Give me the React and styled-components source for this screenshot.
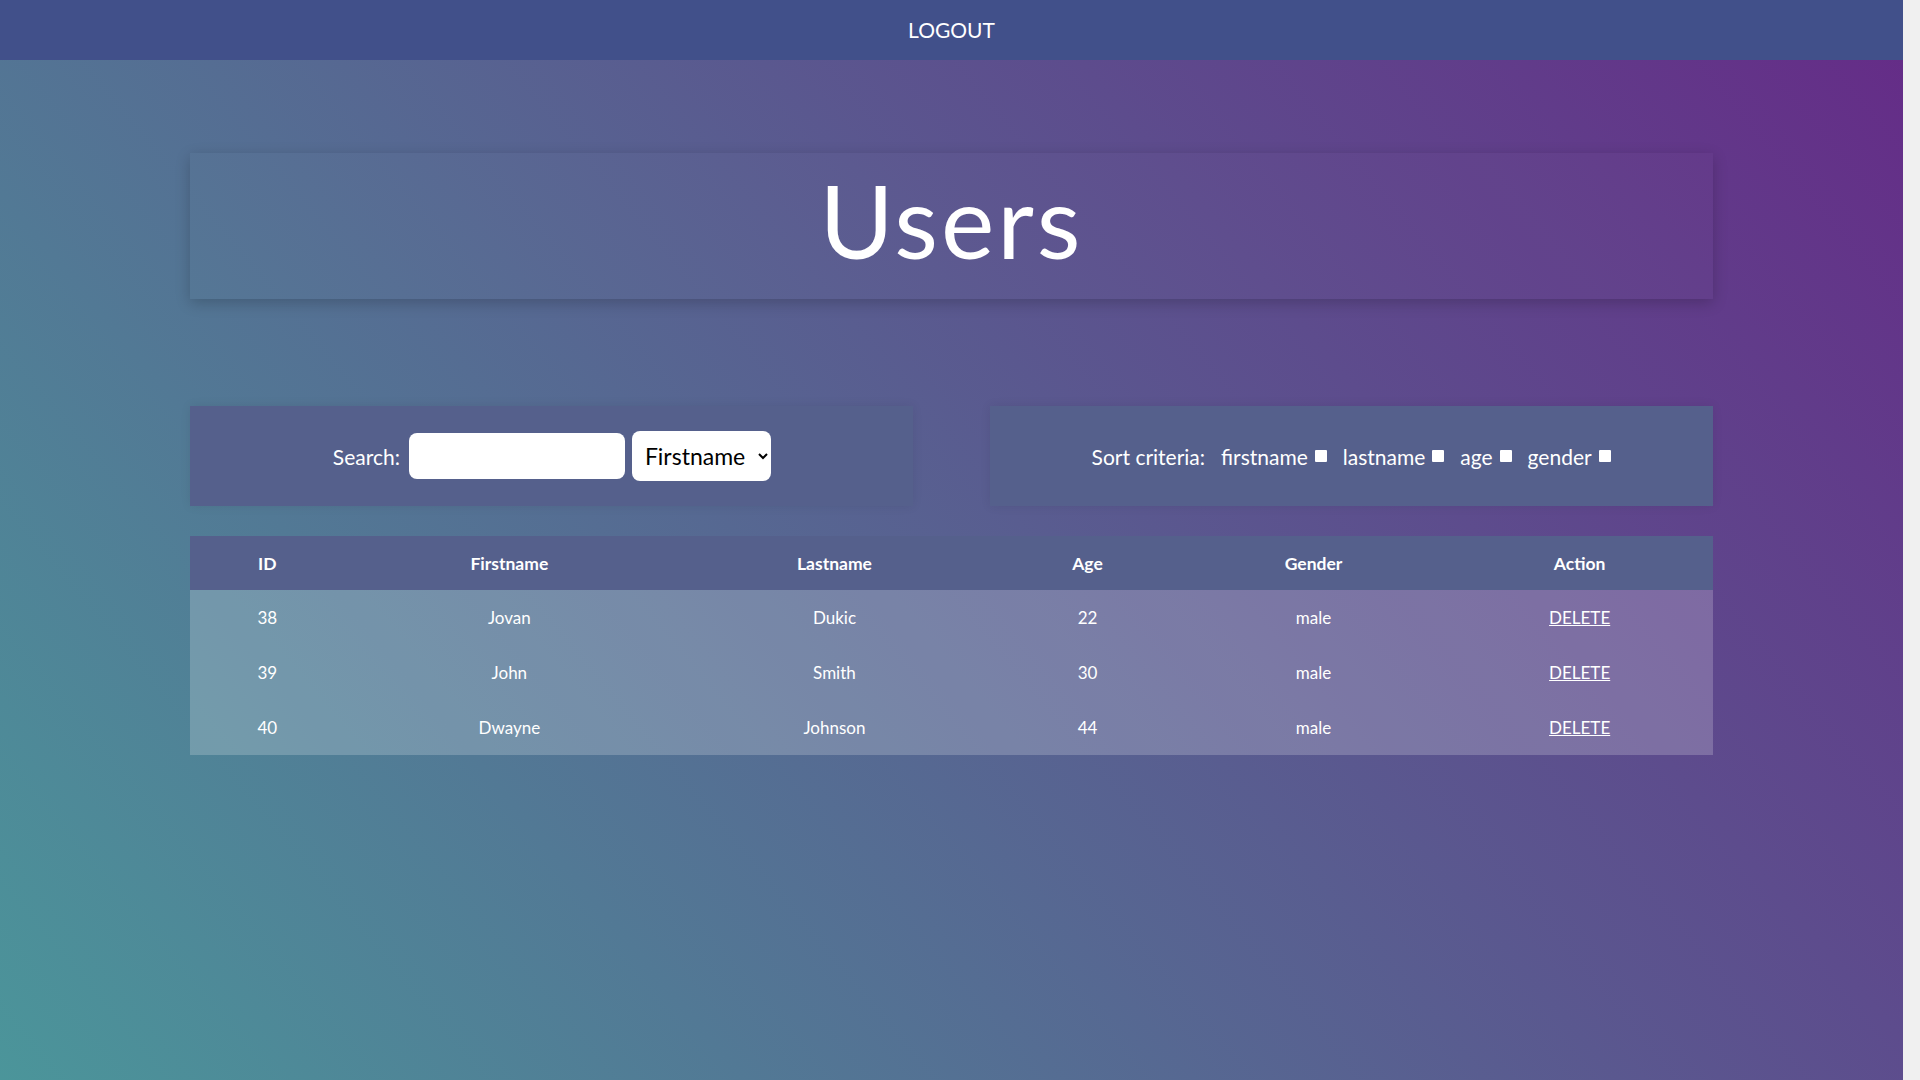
import React from 'react';
import styled, { createGlobalStyle } from 'styled-components';

const GlobalStyle = createGlobalStyle`
  html, body {
    margin: 0;
    padding: 0;
  }
  html {
    background: #f0f0f0;
  }
  body {
    font-family: "Segoe UI", Lato, "Open Sans", sans-serif;
    color: #ffffff;
  }
  * {
    box-sizing: border-box;
  }
`;

// leaves room on the right like the browser's scrollbar gutter
const Page = styled.div`
  width: calc(100% - 17px);
  min-height: 1233px;
  background: linear-gradient(50deg, #4a9a9b 0%, #652b87 100%);
`;

const NavBar = styled.nav`
  height: 60px;
  background: #41508a;
  display: flex;
  align-items: center;
  justify-content: center;
`;

const NavLink = styled.a`
  color: #ffffff;
  font-size: 21px;
  text-decoration: none;
  text-transform: uppercase;
  margin-top: -2px;
`;

const Main = styled.main`
  width: 80%;
  margin: 0 auto;
  padding-top: 93px;
`;

const TitleCard = styled.header`
  height: 146px;
  display: flex;
  align-items: center;
  justify-content: center;
  background: rgba(255, 255, 255, 0.015);
  box-shadow: 0 4px 14px rgba(0, 0, 0, 0.2);
`;

const Title = styled.h1`
  margin: 0;
  font-size: 101px;
  font-weight: 400;
  line-height: 1;
  letter-spacing: 3px;
  padding-bottom: 12px;
`;

const Controls = styled.section`
  margin-top: 107px;
  display: flex;
  justify-content: space-between;
`;

const Panel = styled.div`
  width: 47.5%;
  height: 100px;
  background: #55608c;
  box-shadow: 0 0 10px rgba(0, 0, 0, 0.08);
  display: flex;
  align-items: center;
  justify-content: center;
  font-size: 21px;
`;

const Label = styled.label`
  margin-right: ${p => p.$space || 0}px;
`;

const SearchInput = styled.input`
  width: 216px;
  height: 46px;
  border: none;
  border-radius: 8px;
  background: #ffffff;
  font: inherit;
  color: #000000;
  padding: 0 10px;
  outline: none;
`;

const SortSelect = styled.select`
  width: 139px;
  height: 50px;
  border: none;
  border-radius: 8px;
  background: #ffffff;
  color: #000000;
  font-family: inherit;
  font-size: 23px;
  padding: 0 4px 0 9px;
  margin-left: 7px;
  outline: none;
`;

const SortItem = styled.label`
  display: flex;
  align-items: center;
  gap: 7px;
  margin-left: 16px;
`;

const Box = styled.input`
  appearance: none;
  width: 12px;
  height: 12px;
  margin: 0;
  background: #ffffff;
  border-radius: 1px;
`;

const Table = styled.table`
  margin-top: 30px;
  width: 100%;
  border-collapse: collapse;
  table-layout: fixed;
  font-size: 17px;
  text-align: center;
`;

const HeadRow = styled.tr`
  background: #55608c;
`;

const Th = styled.th`
  height: 54px;
  font-size: 17.5px;
  font-weight: 700;
  padding: 0;
`;

const Row = styled.tr`
  background: rgba(255, 255, 255, 0.2);
`;

const Td = styled.td`
  height: 55px;
  padding: 0;
`;

const DeleteLink = styled.a`
  color: #ffffff;
  text-decoration: underline;
  cursor: pointer;
`;

const columns = [
  { label: 'ID', width: 154 },
  { label: 'Firstname', width: 330 },
  { label: 'Lastname', width: 320 },
  { label: 'Age', width: 186 },
  { label: 'Gender', width: 266 },
  { label: 'Action', width: 266 },
];

const users = [
  { id: 38, firstname: 'Jovan', lastname: 'Dukic', age: 22, gender: 'male' },
  { id: 39, firstname: 'John', lastname: 'Smith', age: 30, gender: 'male' },
  { id: 40, firstname: 'Dwayne', lastname: 'Johnson', age: 44, gender: 'male' },
];

const criteria = ['firstname', 'lastname', 'age', 'gender'];

export default function App() {
  return (
    <Page>
      <GlobalStyle />
      <NavBar>
        <NavLink href="#">Logout</NavLink>
      </NavBar>
      <Main>
        <TitleCard>
          <Title>Users</Title>
        </TitleCard>

        <Controls>
          <Panel>
            <Label htmlFor="search" $space={9}>Search:</Label>
            <SearchInput id="search" type="text" />
            <SortSelect defaultValue="firstname">
              <option value="firstname">Firstname</option>
              <option value="lastname">Lastname</option>
              <option value="age">Age</option>
              <option value="gender">Gender</option>
            </SortSelect>
          </Panel>
          <Panel>
            <Label>Sort criteria:</Label>
            {criteria.map(c => (
              <SortItem key={c}>
                {c}
                <Box type="checkbox" />
              </SortItem>
            ))}
          </Panel>
        </Controls>

        <Table>
          <colgroup>
            {columns.map(c => <col key={c.label} style={{ width: c.width }} />)}
          </colgroup>
          <thead>
            <HeadRow>
              {columns.map(c => <Th key={c.label}>{c.label}</Th>)}
            </HeadRow>
          </thead>
          <tbody>
            {users.map(u => (
              <Row key={u.id}>
                <Td>{u.id}</Td>
                <Td>{u.firstname}</Td>
                <Td>{u.lastname}</Td>
                <Td>{u.age}</Td>
                <Td>{u.gender}</Td>
                <Td><DeleteLink>DELETE</DeleteLink></Td>
              </Row>
            ))}
          </tbody>
        </Table>
      </Main>
    </Page>
  );
}
